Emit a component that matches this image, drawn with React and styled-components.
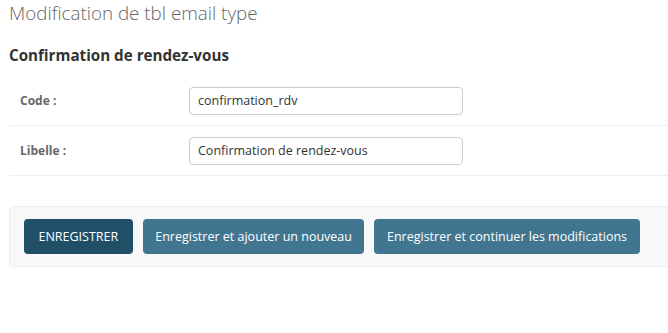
import React from 'react'
import styled, { createGlobalStyle } from 'styled-components'

const GlobalStyle = createGlobalStyle`
  html, body {
    margin: 0;
    padding: 0;
    background: #fff;
    overflow: hidden;
  }
  body {
    font-family: 'Open Sans', 'Noto Sans', sans-serif;
    color: #333;
  }
`

const Page = styled.div`
  width: 690px;
  padding: 0 0 0 9px;
`

const Title = styled.h1`
  margin: 0;
  font-size: 18.8px;
  font-weight: 300;
  color: #666;
  line-height: 26px;
`

const Fieldset = styled.fieldset`
  margin: 18px 0 0;
  padding: 0;
  border: none;
  min-width: 0;
`

const Legend = styled.h2`
  margin: 0 0 10px;
  font-size: 15.2px;
  font-weight: 700;
  color: #333;
  line-height: 22px;
`

const Row = styled.div`
  display: flex;
  align-items: center;
  height: 49px;
  border-bottom: 1px solid #eee;
`

const Label = styled.label`
  width: 180px;
  padding-left: 11px;
  box-sizing: border-box;
  font-size: 12px;
  font-weight: 700;
  color: #666;
`

const Input = styled.input`
  width: 274px;
  height: 28px;
  box-sizing: border-box;
  padding: 0 8px;
  border: 1px solid #ccc;
  border-radius: 4px;
  font-family: inherit;
  font-size: 12.5px;
  color: #333;
  outline: none;
`

const Actions = styled.div`
  display: flex;
  gap: 10px;
  margin-top: 30px;
  padding: 12px 14px;
  background: #f8f8f8;
  border: 1px solid #eee;
  border-radius: 4px;
`

const Button = styled.button`
  height: 35px;
  padding: 0 ${(props) => (props.$primary ? '14.5px' : '12.5px')};
  border: none;
  border-radius: 4px;
  background: ${(props) => (props.$primary ? '#205067' : '#417690')};
  color: #fff;
  font-family: inherit;
  font-size: 12.5px;
  cursor: pointer;
`

const fields = [
  { label: 'Code :', value: 'confirmation_rdv' },
  { label: 'Libelle :', value: 'Confirmation de rendez-vous' },
]

const App = () => {
  return (
    <>
      <GlobalStyle />
      <Page>
        <Title>Modification de tbl email type</Title>
        <Fieldset>
          <Legend>Confirmation de rendez-vous</Legend>
          {fields.map((f) => (
            <Row key={f.label}>
              <Label>{f.label}</Label>
              <Input defaultValue={f.value} />
            </Row>
          ))}
        </Fieldset>
        <Actions>
          <Button $primary>ENREGISTRER</Button>
          <Button>Enregistrer et ajouter un nouveau</Button>
          <Button>Enregistrer et continuer les modifications</Button>
        </Actions>
      </Page>
    </>
  )
}

export default App
